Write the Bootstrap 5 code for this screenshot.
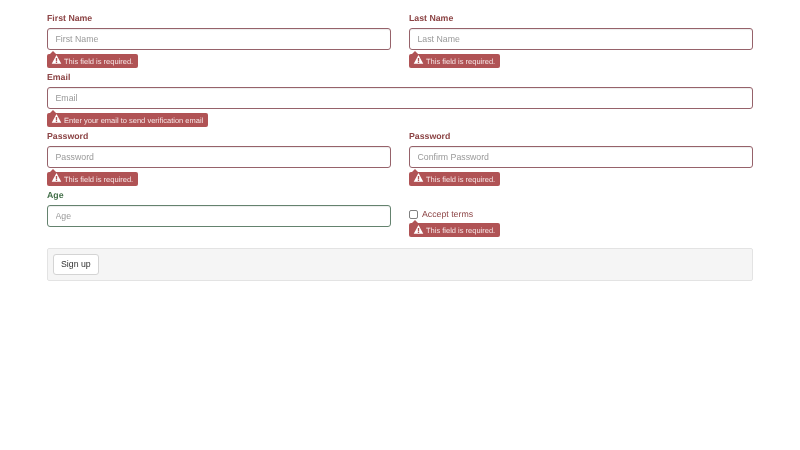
<!DOCTYPE html>
<html lang="en">
<head>
<meta charset="utf-8">
<title>Sign up</title>
<link rel="stylesheet" href="https://cdn.jsdelivr.net/npm/bootstrap@5.3.0/dist/css/bootstrap.min.css">
<style>
body { font-family: "Liberation Sans", Arial, sans-serif; font-size: 8.75px; color: #333; background: #fff; text-rendering: geometricPrecision; }
.page-wrap { padding: 12px 47px 0; filter: blur(.35px); }
.form-line { --bs-gutter-x: 18px; --bs-gutter-y: 0; }
.field-box { height: 59px; }
.field-label { display: block; font-weight: 700; font-size: 8.75px; line-height: 12px; margin: 0 0 4px; height: 12px; }
.is-bad .field-label, .is-bad .check-text { color: #8c4445; }
.is-good .field-label { color: #44704a; }
.form-control.field-input { height: 21.5px; min-height: 21.5px; padding: 0 7.5px; font-size: 8.75px; line-height: 19.5px; border-radius: 3px; color: #555; box-shadow: inset 0 1px 1px rgba(0,0,0,.075); background: #fff; }
.field-input::placeholder { color: #999; opacity: 1; }
.is-bad .form-control.field-input { border: 1px solid #96626a; }
.is-good .form-control.field-input { border: 1px solid #64826e; }
.err-tip { position: relative; display: inline-flex; align-items: center; gap: 3.5px; height: 14px; margin-top: 4px; padding: 1px 5px 0; background: #b05355; color: #f6e6e6; font-size: 7.5px; line-height: 13px; border-radius: 2px; white-space: nowrap; vertical-align: top; }
.err-tip::before { content: ""; position: absolute; left: 3px; top: -3px; border-left: 3px solid transparent; border-right: 3px solid transparent; border-bottom: 3px solid #b05355; }
.err-tip svg { width: 9px; height: 9px; flex: none; margin: 0 0 2.5px -.5px; overflow: visible; }
.check-row { display: flex; align-items: center; gap: 4px; height: 14px; margin-top: 18px; }
.form-check-input.check-box { width: 9px; height: 9px; margin: 0; border: 1px solid #808080; border-radius: 2px; float: none; flex: none; }
.check-text { font-size: 8.75px; line-height: 14px; }
.err-tip.after-check { margin-top: 2px; }
.action-well { background: #f5f5f5; border: 1px solid #e3e3e3; border-radius: 2px; padding: 5px; height: 33px; }
.btn.send-btn { height: 21px; padding: 0 7px; font-size: 8.75px; line-height: 19px; color: #333; background: #fff; border: 1px solid #d4d4d4; border-radius: 3px; }
</style>
</head>
<body>
<div class="page-wrap">
<form>
  <div class="row form-line">
    <div class="col-6 field-box is-bad">
      <label class="field-label" for="f1">First Name</label>
      <input id="f1" class="form-control field-input" placeholder="First Name">
      <div class="err-tip"><svg viewBox="0 0 16 16"><path fill="#fff" fill-rule="evenodd" d="M8 0 16.5 15.5H-.5ZM6.8 5.5v5.5h2.4V5.5ZM6.8 12v2h2.4v-2Z"/></svg>This field is required.</div>
    </div>
    <div class="col-6 field-box is-bad">
      <label class="field-label" for="f2">Last Name</label>
      <input id="f2" class="form-control field-input" placeholder="Last Name">
      <div class="err-tip"><svg viewBox="0 0 16 16"><path fill="#fff" fill-rule="evenodd" d="M8 0 16.5 15.5H-.5ZM6.8 5.5v5.5h2.4V5.5ZM6.8 12v2h2.4v-2Z"/></svg>This field is required.</div>
    </div>
  </div>
  <div class="row form-line">
    <div class="col-12 field-box is-bad">
      <label class="field-label" for="f3">Email</label>
      <input id="f3" class="form-control field-input" placeholder="Email">
      <div class="err-tip"><svg viewBox="0 0 16 16"><path fill="#fff" fill-rule="evenodd" d="M8 0 16.5 15.5H-.5ZM6.8 5.5v5.5h2.4V5.5ZM6.8 12v2h2.4v-2Z"/></svg>Enter your email to send verification email</div>
    </div>
  </div>
  <div class="row form-line">
    <div class="col-6 field-box is-bad">
      <label class="field-label" for="f4">Password</label>
      <input id="f4" class="form-control field-input" placeholder="Password">
      <div class="err-tip"><svg viewBox="0 0 16 16"><path fill="#fff" fill-rule="evenodd" d="M8 0 16.5 15.5H-.5ZM6.8 5.5v5.5h2.4V5.5ZM6.8 12v2h2.4v-2Z"/></svg>This field is required.</div>
    </div>
    <div class="col-6 field-box is-bad">
      <label class="field-label" for="f5">Password</label>
      <input id="f5" class="form-control field-input" placeholder="Confirm Password">
      <div class="err-tip"><svg viewBox="0 0 16 16"><path fill="#fff" fill-rule="evenodd" d="M8 0 16.5 15.5H-.5ZM6.8 5.5v5.5h2.4V5.5ZM6.8 12v2h2.4v-2Z"/></svg>This field is required.</div>
    </div>
  </div>
  <div class="row form-line">
    <div class="col-6 field-box is-good">
      <label class="field-label" for="f6">Age</label>
      <input id="f6" class="form-control field-input" placeholder="Age">
    </div>
    <div class="col-6 field-box is-bad">
      <div class="check-row">
        <input id="f7" type="checkbox" class="form-check-input check-box">
        <label class="check-text" for="f7">Accept terms</label>
      </div>
      <div class="err-tip after-check"><svg viewBox="0 0 16 16"><path fill="#fff" fill-rule="evenodd" d="M8 0 16.5 15.5H-.5ZM6.8 5.5v5.5h2.4V5.5ZM6.8 12v2h2.4v-2Z"/></svg>This field is required.</div>
    </div>
  </div>
  <div class="action-well">
    <button type="button" class="btn send-btn">Sign up</button>
  </div>
</form>
</div>
<script src="https://cdn.jsdelivr.net/npm/bootstrap@5.3.0/dist/js/bootstrap.bundle.min.js"></script>
</body>
</html>
